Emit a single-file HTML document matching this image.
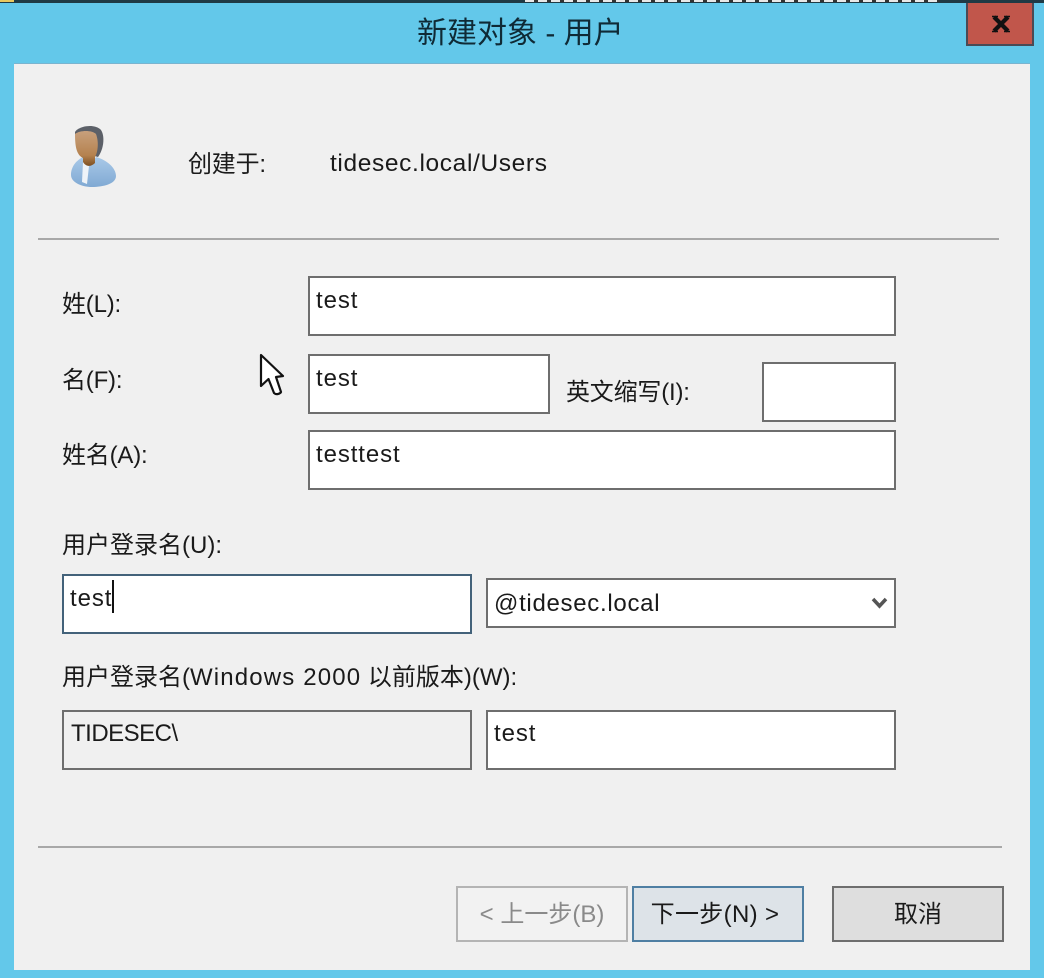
<!DOCTYPE html>
<html lang="zh"><head><meta charset="utf-8"><title>新建对象 - 用户</title>
<style>
html,body{margin:0;padding:0}
body{width:1044px;height:978px;position:relative;overflow:hidden;background:#63c8ea;font-family:"Liberation Sans","Noto Sans CJK SC",sans-serif;color:#1a1a1a;font-size:24px}
#w{position:absolute;left:0;top:0;width:1044px;height:978px;filter:blur(.35px)}
.a{position:absolute;box-sizing:border-box}
.t{position:absolute;white-space:nowrap;line-height:30px}
.l{font-size:24px;letter-spacing:-.2px}
.v{letter-spacing:.9px}
.b{position:absolute;box-sizing:border-box;border:2px solid #6e6e6e;background:#fff}
.h{position:absolute;height:2px;background:#a8a8a8}
.btn{position:absolute;box-sizing:border-box;top:886px;height:56px;text-align:center;line-height:54px;font-size:24px}
</style></head><body><div id="w">
<div class="a" style="left:0;top:0;width:1044px;height:3px;background:#1f3a45"></div>
<div class="a" style="left:525px;top:0;width:415px;height:2px;background:repeating-linear-gradient(90deg,#e8e8e8 0 9px,#333 9px 13px)"></div>
<div class="a" style="left:0;top:0;width:14px;height:2px;background:#e8c860"></div>
<div class="a" style="left:14px;top:63px;width:1016px;height:907px;background:#f0f0f0;border-top:1px solid #7ab4cf"></div>
<div class="t" style="left:417px;top:19px;font-size:30px;color:#0f2a36">新建对象 - 用户</div>
<div class="a" style="left:966px;top:3px;width:68px;height:43px;background:#c1564b;border:2px solid #4a4a55;border-top:0"></div>
<svg class="a" style="left:991px;top:15px" width="20" height="18" viewBox="0 0 20 18"><path d="M3 2L17 16M17 2L3 16" stroke="#111" stroke-width="4.200" fill="none"/><path d="M1 1.500H7M13 1.500H19M1 16.500H7M13 16.500H19" stroke="#111" stroke-width="1.500" fill="none"/></svg>

<svg class="a" style="left:68px;top:122px" width="54" height="68" viewBox="0 0 54 68">
<defs><linearGradient id="f" x1="0" y1="0" x2="0" y2="1"><stop offset="0" stop-color="#c8a07c"/><stop offset=".7" stop-color="#b5824f"/><stop offset="1" stop-color="#7d5022"/></linearGradient>
<linearGradient id="s" x1="0" y1="0" x2="0" y2="1"><stop offset="0" stop-color="#a9c9e8"/><stop offset="1" stop-color="#80a9d3"/></linearGradient></defs>
<path d="M3 53C3 44 9 38 15 35C18 40 24 42 28 35C39 38 48 46 48 54C48 62 35 65 24 65C13 65 3 60 3 53Z" fill="url(#s)"/>
<path d="M15 40L21 44L19 62L14 60Z" fill="#eef3f8"/>
<path d="M7 10C10 4 27 1 33 8C37 14 36 27 30 35L20 32L7 12Z" fill="#5c6068"/>
<path d="M7 12C12 8 24 8 28 12C31 20 30 30 27 35L27 41C23 45 18 45 15 40L15 36C9 33 7 26 7 12Z" fill="url(#f)"/>
</svg>

<div class="t l" style="left:188px;top:150px">创建于:</div>
<div class="t" style="left:330px;top:149px;font-size:24.500px;letter-spacing:.63px">tidesec.local/Users</div>
<div class="h" style="left:38px;top:238px;width:961px"></div>

<div class="t l" style="left:62px;top:290px">姓(L):</div>
<div class="b" style="left:308px;top:276px;width:588px;height:60px"></div>
<div class="t v" style="left:316px;top:286px">test</div>

<div class="t l" style="left:62px;top:366px">名(F):</div>
<div class="b" style="left:308px;top:354px;width:242px;height:60px"></div>
<div class="t v" style="left:316px;top:364px">test</div>
<div class="t l" style="left:566px;top:378px">英文缩写(I):</div>
<div class="b" style="left:762px;top:362px;width:134px;height:60px"></div>

<svg class="a" style="left:258px;top:352px" width="30" height="46" viewBox="0 0 30 46"><path d="M3 3V34L10.500 27L16 41C18 43 22 42 23 40L18 25L25 24Z" fill="#fff" stroke="#111" stroke-width="2.200" stroke-linejoin="round"/></svg>

<div class="t l" style="left:62px;top:441px">姓名(A):</div>
<div class="b" style="left:308px;top:430px;width:588px;height:60px"></div>
<div class="t v" style="left:316px;top:440px">testtest</div>

<div class="t l" style="left:62px;top:531px;letter-spacing:0">用户登录名(U):</div>
<div class="b" style="left:62px;top:574px;width:410px;height:60px;border-color:#43627a"></div>
<div class="t v" style="left:70px;top:584px">test</div>
<div class="a" style="left:112px;top:580px;width:2px;height:33px;background:#111"></div>
<div class="b" style="left:486px;top:578px;width:410px;height:50px"></div>
<div class="t" style="left:494px;top:589px;letter-spacing:.7px">@tidesec.local</div>
<svg class="a" style="left:871px;top:597px" width="17" height="14" viewBox="0 0 17 14"><path d="M2 2L8.500 9L15 2" stroke="#555" stroke-width="3.500" fill="none"/></svg>

<div class="t l" style="left:62px;top:663px;letter-spacing:0">用户登录名(<span style="letter-spacing:1.150px">Windows 2000</span> 以前版本)(W):</div>
<div class="b" style="left:62px;top:710px;width:410px;height:60px;background:#f0f0f0"></div>
<div class="t" style="left:71px;top:719px;letter-spacing:-.5px">TIDESEC\</div>
<div class="b" style="left:486px;top:710px;width:410px;height:60px"></div>
<div class="t v" style="left:494px;top:719px">test</div>

<div class="h" style="left:38px;top:846px;width:964px"></div>

<div class="btn" style="left:456px;width:172px;border:2px solid #b4b4b4;background:#f2f2f2;color:#8a8a8a">&lt; 上一步(B)</div>
<div class="btn" style="left:632px;width:172px;border:2px solid #4f7fa3;background:#dde3e8;color:#1a1a1a;padding-right:6px;letter-spacing:.35px">下一步(N) &gt;</div>
<div class="btn" style="left:832px;width:172px;border:2px solid #6e6e6e;background:#dedede;color:#1a1a1a">取消</div>
</div></body></html>
